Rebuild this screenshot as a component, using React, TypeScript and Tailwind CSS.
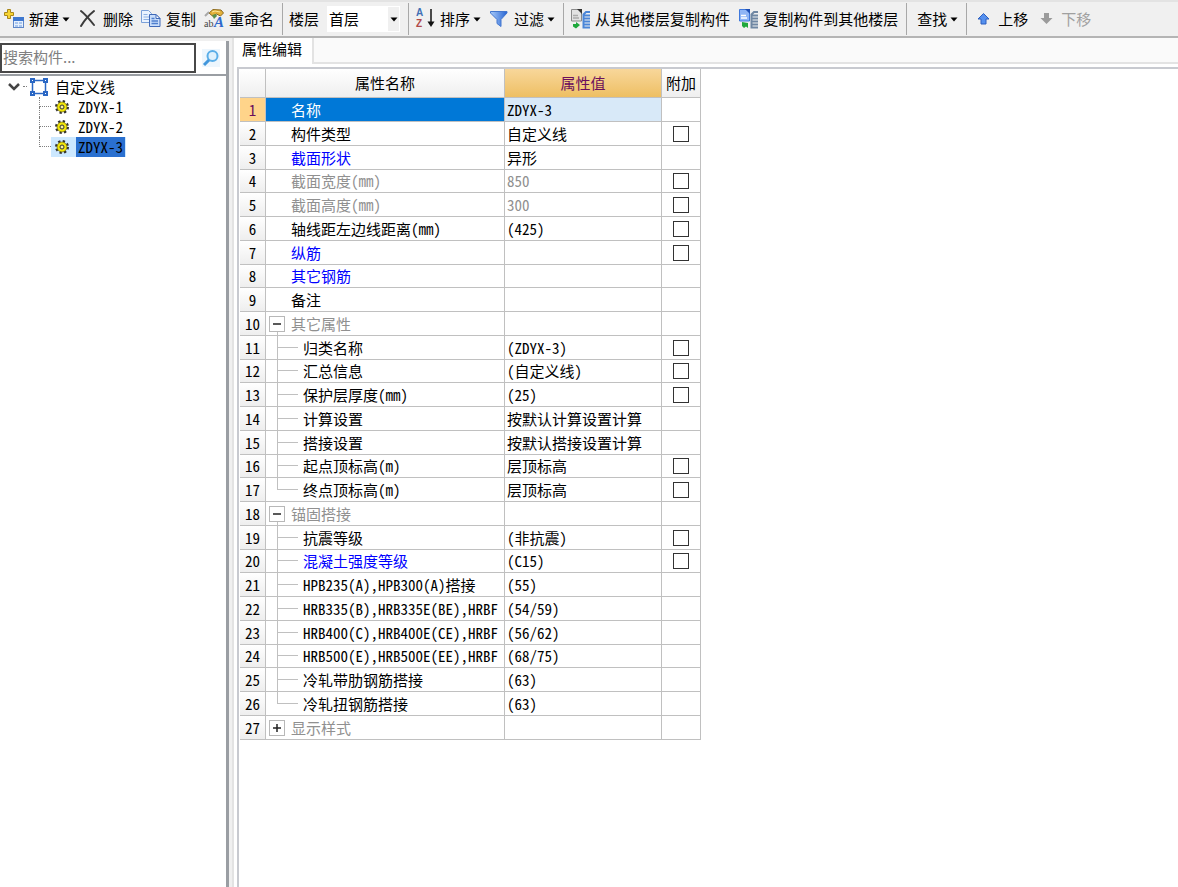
import { useState, type ReactNode } from "react";
import clsx from "clsx";

type Tone = "normal" | "blue" | "gray";

type Property = {
  name: string;
  value?: string;
  tone?: Tone;
  extra?: boolean;
  // "open" and "closed" are group rows, "child" and "last" sit below one
  kind?: "open" | "closed" | "child" | "last";
};

const properties: Property[] = [
  { name: "名称", value: "ZDYX-3" },
  { name: "构件类型", value: "自定义线", extra: true },
  { name: "截面形状", value: "异形", tone: "blue" },
  { name: "截面宽度(mm)", value: "850", tone: "gray", extra: true },
  { name: "截面高度(mm)", value: "300", tone: "gray", extra: true },
  { name: "轴线距左边线距离(mm)", value: "(425)", extra: true },
  { name: "纵筋", tone: "blue", extra: true },
  { name: "其它钢筋", tone: "blue" },
  { name: "备注" },
  { name: "其它属性", tone: "gray", kind: "open" },
  { name: "归类名称", value: "(ZDYX-3)", extra: true, kind: "child" },
  { name: "汇总信息", value: "(自定义线)", extra: true, kind: "child" },
  { name: "保护层厚度(mm)", value: "(25)", extra: true, kind: "child" },
  { name: "计算设置", value: "按默认计算设置计算", kind: "child" },
  { name: "搭接设置", value: "按默认搭接设置计算", kind: "child" },
  { name: "起点顶标高(m)", value: "层顶标高", extra: true, kind: "child" },
  { name: "终点顶标高(m)", value: "层顶标高", extra: true, kind: "last" },
  { name: "锚固搭接", tone: "gray", kind: "open" },
  { name: "抗震等级", value: "(非抗震)", extra: true, kind: "child" },
  { name: "混凝土强度等级", value: "(C15)", tone: "blue", extra: true, kind: "child" },
  { name: "HPB235(A),HPB300(A)搭接", value: "(55)", kind: "child" },
  { name: "HRB335(B),HRB335E(BE),HRBF", value: "(54/59)", kind: "child" },
  { name: "HRB400(C),HRB400E(CE),HRBF", value: "(56/62)", kind: "child" },
  { name: "HRB500(E),HRB500E(EE),HRBF", value: "(68/75)", kind: "child" },
  { name: "冷轧带肋钢筋搭接", value: "(63)", kind: "child" },
  { name: "冷轧扭钢筋搭接", value: "(63)", kind: "last" },
  { name: "显示样式", tone: "gray", kind: "closed" },
];

const components = ["ZDYX-1", "ZDYX-2", "ZDYX-3"];

const mono =
  "font-['Noto_Sans_Mono_CJK_SC','Liberation_Mono','Noto_Sans_CJK_SC',monospace]";

function Caret() {
  return (
    <svg width="8" height="5" viewBox="0 0 8 5" className="shrink-0">
      <path d="M0.5 0.5h7L4 4.5z" fill="#000" />
    </svg>
  );
}

function NewIcon() {
  return (
    <svg width="20" height="20" viewBox="0 0 20 20">
      <path
        d="M3.500 0.500h3v3h3v3h-3v3h-3v-3h-3v-3h3z"
        fill="#f7d433"
        stroke="#a8861a"
      />
      <rect x="9.500" y="8.500" width="10" height="10" fill="#e6f0fd" stroke="#5f87c8" />
      <rect x="9" y="8" width="11" height="4" fill="#3f78d0" />
      <path d="M11 13h3v2h-3zM15 13h3v2h-3zM11 16h3v2h-3zM15 16h3v2h-3z" fill="#a9c6ef" />
    </svg>
  );
}

function DeleteIcon() {
  return (
    <svg width="20" height="20" viewBox="0 0 20 20" fill="none" stroke="#3c3c3c">
      <path d="M3 2c4 3 9 9 13 14" strokeWidth="2" strokeLinecap="round" />
      <path d="M16 2C11 6 6 12 3 17" strokeWidth="2" strokeLinecap="round" />
    </svg>
  );
}

function CopyIcon() {
  return (
    <svg width="20" height="20" viewBox="0 0 20 20">
      <path d="M0.500 1.500h7l3 3v9h-10z" fill="#eaf3ff" stroke="#7ba0d8" />
      <path d="M2.500 5.500h4M2.500 8h6M2.500 10.500h6" stroke="#8fb1e2" />
      <path d="M8.500 5.500h6.500l4 4v8h-10.500z" fill="#c9defb" stroke="#3f69b8" />
      <path d="M15 5.500v4h4z" fill="#fff" stroke="#3f69b8" />
      <path d="M10.500 9.500h3M10.500 12h6.500M10.500 14.500h6.500" stroke="#4f7fce" strokeWidth="1.500" />
    </svg>
  );
}

function RenameIcon() {
  return (
    <svg width="20" height="20" viewBox="0 0 20 20" className="overflow-visible">
      <path d="M5 4l4-3.500 8 .5 2.500 3-3 3-4-2-4 2z" fill="#e3b13a" stroke="#8d6a1d" />
      <path d="M8 3l3-1 5 1" stroke="#fbe69a" fill="none" />
      <path d="M5 3L1 7" stroke="#a8a8a8" strokeWidth="2" />
      <path d="M8 6l4-1 1 2-3 3z" fill="#5a8f4a" />
      <text x="0" y="18" fontSize="10" fontFamily="Liberation Serif" fill="#444">
        ab
      </text>
      <text
        x="10"
        y="18"
        fontSize="15"
        fontStyle="italic"
        fontWeight="bold"
        fontFamily="Liberation Serif"
        fill="#2f68cc"
      >
        A
      </text>
    </svg>
  );
}

function SortIcon() {
  return (
    <svg width="20" height="20" viewBox="0 0 20 20" className="overflow-visible">
      <text x="1" y="7" fontSize="10" fontWeight="bold" fontFamily="Liberation Sans" fill="#3f6fb5">
        A
      </text>
      <text x="1" y="18" fontSize="10" fontWeight="bold" fontFamily="Liberation Sans" fill="#b04a4a">
        Z
      </text>
      <path d="M16 0v14" stroke="#111" strokeWidth="1.500" />
      <path d="M12.500 12.500h7L16 18z" fill="#111" />
    </svg>
  );
}

function FilterIcon() {
  return (
    <svg width="20" height="20" viewBox="0 0 20 20">
      <defs>
        <linearGradient id="funnel" x1="0" x2="1">
          <stop offset="0" stopColor="#a9cbfa" />
          <stop offset="1" stopColor="#2764d2" />
        </linearGradient>
      </defs>
      <path
        d="M1.500 2.500h16.500v1.500l-6 6.500v7l-4-3v-4l-6.500-6.500z"
        fill="url(#funnel)"
        stroke="#4377cf"
      />
    </svg>
  );
}

function FloorCopyIcon({ blue }: { blue?: boolean }) {
  const page = blue ? "#3f78dc" : "#8a8a8a";
  const stack = blue ? "#6f87a3" : "#4b86d8";
  return (
    <svg width="20" height="20" viewBox="0 0 20 20">
      <path
        d="M1.500 0.500h7l3 3v8.500h-10z"
        fill={blue ? "#8fb5f5" : "#e2e2e2"}
        stroke={page}
      />
      <path d="M7 0h5v5z" fill={blue ? "#1d4fb5" : "#333"} />
      <path d="M3 6.500h5M3 9h6" stroke={blue ? "#fff" : "#aaa"} strokeWidth="1.500" />
      {blue ? (
        <path d="M4 13l6 1v5l-2-1.500-2 1.500-2-2z" fill="#1fa83c" />
      ) : (
        <path d="M3 15h3v-2l4 3-4 3.500-3-2z" fill="#1fa83c" />
      )}
      <path
        d="M13.500 19.500v-14L16 3h4M14 6.500h6M14 9.500h6M14 12.500h6M14 15.500h6M14 18.500h6"
        fill="none"
        stroke={stack}
        strokeWidth="2"
      />
    </svg>
  );
}

function ArrowIcon({ down }: { down?: boolean }) {
  return (
    <svg width="20" height="20" viewBox="0 0 20 20">
      {down ? (
        <path d="M8 4h5v5h3.500L10.500 15 4.500 9H8z" fill="#9b9b9b" />
      ) : (
        <path
          d="M10.500 4.500L16 10h-3v5H8v-5H5z"
          fill="#5590ee"
          stroke="#2c5fc0"
        />
      )}
    </svg>
  );
}

function SearchIcon() {
  return (
    <svg width="20" height="20" viewBox="0 0 20 20" fill="none">
      <rect x="1" y="1" width="18" height="18" fill="#edf6fd" />
      <circle cx="11.500" cy="8" r="5" stroke="#5aaee8" strokeWidth="2" fill="#dff1fd" />
      <path d="M8 12l-5 5" stroke="#4297dc" strokeWidth="3" />
    </svg>
  );
}

function FrameIcon() {
  return (
    <svg width="18" height="18" viewBox="0 0 18 18" className="shrink-0">
      <rect x="2.500" y="2.500" width="13" height="13" fill="#fff" stroke="#2a67c4" strokeWidth="1.500" />
      <path d="M0 0h5v5H0zM13 0h5v5h-5zM0 13h5v5H0zM13 13h5v5h-5z" fill="#2a67c4" />
      <path d="M2 2h1v1H2zM15 2h1v1h-1zM2 15h1v1H2zM15 15h1v1h-1z" fill="#fff" />
    </svg>
  );
}

function GearIcon() {
  return (
    <svg width="14" height="14" viewBox="0 0 14 14" className="shrink-0">
      <circle cx="7" cy="7" r="5.500" fill="none" stroke="#333" strokeWidth="3" strokeDasharray="2.160 2.160" />
      <circle cx="7" cy="7" r="5" fill="#f2e60a" stroke="#5a5500" strokeWidth="0.600" />
      <circle cx="7" cy="7" r="2" fill="#f7f2a0" stroke="#333" />
    </svg>
  );
}

function ToolGroup({ children }: { children: ReactNode }) {
  return (
    <div className="flex items-center gap-2 border-r border-[#a8a8a8] pl-1.5 pr-2 first:pl-1 last:border-r-0">
      {children}
    </div>
  );
}

type ToolButtonProps = {
  icon?: ReactNode;
  label: string;
  menu?: boolean;
  disabled?: boolean;
};

function ToolButton({ icon, label, menu, disabled }: ToolButtonProps) {
  return (
    <button
      type="button"
      disabled={disabled}
      className="flex items-center gap-[5px] whitespace-nowrap disabled:text-[#a0a0a0]"
    >
      {icon}
      <span className="flex items-center gap-[3px]">
        {label}
        {menu && <Caret />}
      </span>
    </button>
  );
}

function Toolbar() {
  return (
    <header className="flex h-[38px] shrink-0 border-t-2 border-b-2 border-t-[#e3e3e3] border-b-[#b4b4b4] bg-[#f0f0f0] py-px">
      <ToolGroup>
        <ToolButton icon={<NewIcon />} label="新建" menu />
        <ToolButton icon={<DeleteIcon />} label="删除" />
        <ToolButton icon={<CopyIcon />} label="复制" />
        <ToolButton icon={<RenameIcon />} label="重命名" />
      </ToolGroup>
      <ToolGroup>
        <label htmlFor="floor">楼层</label>
        <div className="relative">
          <select
            id="floor"
            className="h-[26px] w-[73px] appearance-none bg-white pl-[2px] leading-5"
          >
            <option>首层</option>
          </select>
          <span className="pointer-events-none absolute inset-y-px right-px flex w-[11px] items-center justify-center bg-[#f0f0f0]">
            <Caret />
          </span>
        </div>
      </ToolGroup>
      <ToolGroup>
        <ToolButton icon={<SortIcon />} label="排序" menu />
        <ToolButton icon={<FilterIcon />} label="过滤" menu />
      </ToolGroup>
      <ToolGroup>
        <ToolButton icon={<FloorCopyIcon />} label="从其他楼层复制构件" />
        <ToolButton icon={<FloorCopyIcon blue />} label="复制构件到其他楼层" />
      </ToolGroup>
      <ToolGroup>
        <span className="pl-1">
          <ToolButton label="查找" menu />
        </span>
      </ToolGroup>
      <ToolGroup>
        <ToolButton icon={<ArrowIcon />} label="上移" />
        <ToolButton icon={<ArrowIcon down />} label="下移" disabled />
      </ToolGroup>
    </header>
  );
}

function ComponentTree() {
  const [selected, setSelected] = useState("ZDYX-3");

  return (
    <aside className="mt-[3px] flex w-[229px] shrink-0 flex-col border-r-[3px] border-[#9a9ea3] bg-white">
      <div className="flex items-center border-b-2 border-[#9a9ea3] bg-white pt-[2px] pb-px">
        <input
          type="text"
          aria-label="搜索构件"
          placeholder="搜索构件..."
          className="h-[30px] min-w-0 flex-1 border-2 border-[#484848] px-px pb-1 placeholder:text-[#808080] outline-none"
        />
        <button type="button" aria-label="搜索" className="flex w-[30px] justify-center">
          <SearchIcon />
        </button>
      </div>
      <div className="flex h-[21px] items-center pl-2">
        <svg width="12" height="8" viewBox="0 0 12 8" fill="none">
          <path d="M1 1l5 5 5-5" stroke="#444" strokeWidth="2.500" />
        </svg>
        <span className="mx-[3px] w-1 border-b border-dotted border-[#808080]" />
        <FrameIcon />
        <span className="pl-[7px]">自定义线</span>
      </div>
      <ul className={mono}>
        {components.map((name, i) => (
          <li key={name} className="flex h-5 pl-[39px]">
            <span className="w-3">
              <span className="block h-1/2 border-b border-l border-dotted border-[#808080]" />
              {i < components.length - 1 && (
                <span className="block h-1/2 border-l border-dotted border-[#808080]" />
              )}
            </span>
            <button
              type="button"
              onClick={() => setSelected(name)}
              className={clsx(
                "flex items-center gap-[7px] pr-px pl-1",
                selected === name && "bg-[#cce8ff]"
              )}
            >
              <GearIcon />
              <span
                className={clsx(
                  "h-5 px-[2px] leading-5",
                  selected === name && "bg-[#2a70d0]"
                )}
              >
                {name}
              </span>
            </button>
          </li>
        ))}
      </ul>
    </aside>
  );
}

function NameCell({ row }: { row: Property }) {
  if (row.kind === "open" || row.kind === "closed") {
    return (
      <div className="flex h-full pl-[3px]">
        <div className="flex w-4 flex-col items-center">
          <span className="h-1 shrink-0" />
          <button
            type="button"
            aria-label={row.name}
            className="flex size-4 shrink-0 items-center justify-center border border-[#b8b8b8] bg-white text-black"
          >
            <svg width="10" height="10" viewBox="0 0 10 10" stroke="#222" strokeWidth="1.500">
              <path d={row.kind === "open" ? "M1 5h8" : "M1 5h8M5 1v8"} />
            </svg>
          </button>
          {row.kind === "open" && <span className="w-px flex-1 bg-[#c0c0c0]" />}
        </div>
        <span className="self-center pl-[6px]">{row.name}</span>
      </div>
    );
  }

  if (row.kind) {
    return (
      <div className="flex h-full pl-[11px]">
        <span className="w-[21px] shrink-0">
          <span className="block h-1/2 border-b border-l border-[#c0c0c0]" />
          {row.kind === "child" && (
            <span className="block h-1/2 border-l border-[#c0c0c0]" />
          )}
        </span>
        <span className="self-center pl-[5px]">{row.name}</span>
      </div>
    );
  }

  return <div className="flex h-full items-center pl-[25px]">{row.name}</div>;
}

function PropertyTable() {
  const cell = "h-[inherit] border-r border-b border-[#c0c0c0] p-0";
  const head = "border-r border-b border-[#c0c0c0] p-0 font-normal";

  return (
    <table
      className={clsx(
        "w-[461px] table-fixed border-separate border-spacing-0 whitespace-nowrap leading-5",
        mono
      )}
    >
      <colgroup>
        <col className="w-[26px]" />
        <col className="w-[239px]" />
        <col className="w-[157px]" />
        <col className="w-[39px]" />
      </colgroup>
      <thead>
        <tr className="h-[29px] bg-linear-to-b from-white to-[#eeeeee]">
          <th className={head}></th>
          <th className={head}>属性名称</th>
          <th
            className={clsx(
              head,
              "bg-linear-to-b from-[#f8d79a] to-[#eebf62] text-[#6b0f5c]"
            )}
          >
            属性值
          </th>
          <th className={head}>附加</th>
        </tr>
      </thead>
      <tbody>
        {properties.map((row, i) => (
          <tr
            key={row.name}
            className={clsx(
              "h-6 nth-[4n]:h-[23px]",
              row.tone === "blue" && "text-[#0000ff]",
              row.tone === "gray" && "text-[#909090]"
            )}
          >
            <th
              scope="row"
              className={clsx(
                cell,
                "font-normal",
                i === 0
                  ? "bg-[#ffd48a] text-[#6b0f5c]"
                  : "bg-linear-to-b from-white to-[#eeeeee] text-black"
              )}
            >
              {i + 1}
            </th>
            <td
              className={clsx(
                cell,
                "overflow-hidden",
                i === 0 && "bg-[#0078d7] text-white"
              )}
            >
              <NameCell row={row} />
            </td>
            <td
              className={clsx(
                cell,
                "pl-[2px]",
                i === 0 && "bg-[#d8e9f8]",
                row.tone !== "gray" && "text-black"
              )}
            >
              {row.value}
            </td>
            <td className={cell}>
              {row.extra && (
                <input
                  type="checkbox"
                  aria-label={row.name}
                  className="mx-auto block size-4 appearance-none border border-[#333333] bg-white checked:bg-[#0078d7]"
                />
              )}
            </td>
          </tr>
        ))}
      </tbody>
    </table>
  );
}

export default function App() {
  return (
    <div className="flex min-h-screen flex-col bg-[#f0f0f0] font-['Noto_Sans_CJK_SC',sans-serif] text-[15px] leading-5 text-black">
      <Toolbar />
      <div className="flex flex-1">
        <ComponentTree />
        <main className="ml-[3px] flex min-w-0 flex-1 flex-col border-l-2 border-[#e3e3e3] bg-white">
          <div role="tablist" className="flex h-[26px] shrink-0">
            <button
              type="button"
              role="tab"
              aria-selected="true"
              className="border-r-2 border-[#e3e3e3] bg-white pr-[10px] pb-1 pl-2"
            >
              属性编辑
            </button>
            <div className="flex-1 border-b-2 border-[#e3e3e3] bg-[#fafafa]" />
          </div>
          <div className="mt-[3px] ml-[3px] flex-1 border-t-2 border-l-2 border-[#c8cad0] pl-px">
            <PropertyTable />
          </div>
        </main>
      </div>
    </div>
  );
}
